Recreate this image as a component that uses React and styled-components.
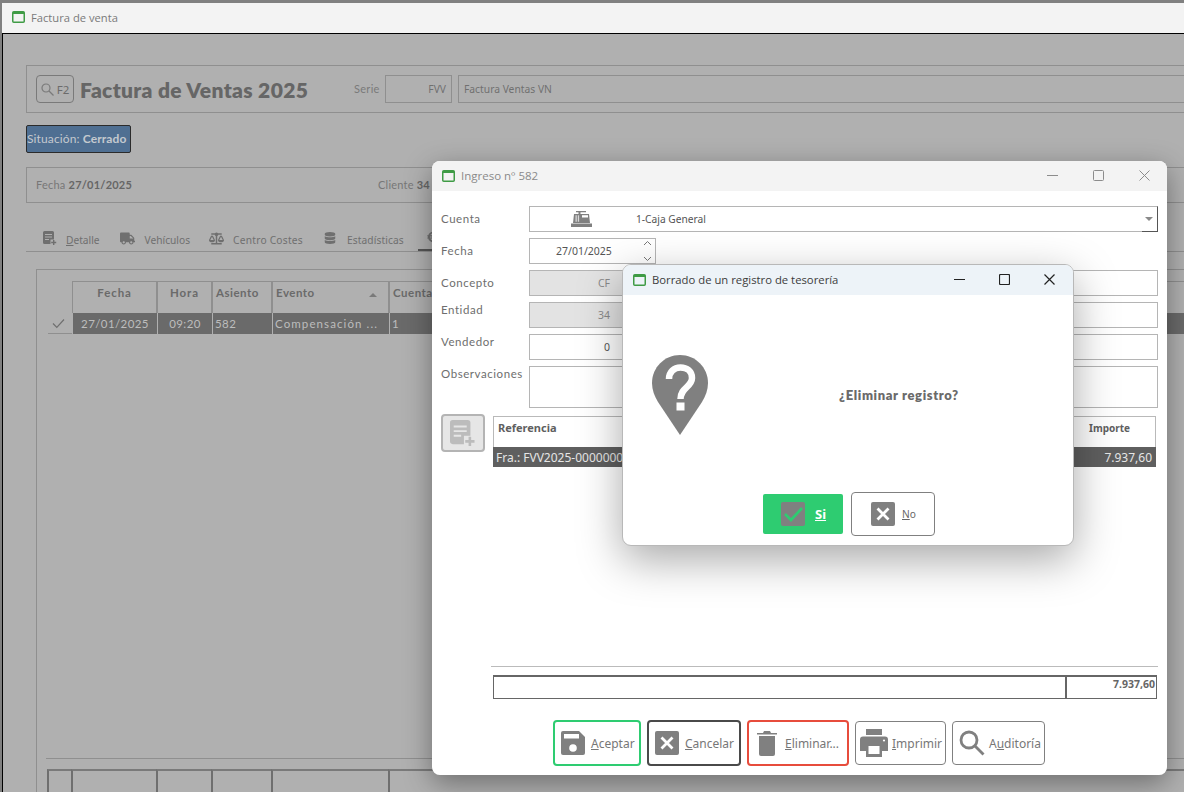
import React from "react";
import styled, { createGlobalStyle } from "styled-components";
import { FaTruck, FaBalanceScale, FaDatabase, FaEuroSign } from "react-icons/fa";

const Global = createGlobalStyle`
  html, body { margin: 0; padding: 0; background: #808080; overflow: hidden; }
  * { box-sizing: border-box; }
`;
const GOTHIC = `"Lato", "Open Sans", sans-serif`;
const TAHOMA = `"Noto Sans", "Open Sans", sans-serif`;
const SEGOE = `"Open Sans", "Noto Sans", sans-serif`;

const Desktop = styled.div`position: relative; width: 1184px; height: 792px; overflow: hidden; background: #808080;`;

/* main window */
const MainWindow = styled.div`position: absolute; left: 2px; top: 3px; width: 1200px; height: 800px; background: #b0b0b0; border-left: 1px solid #000;`;
const MainTitle = styled.div`
  height: 31px; margin-left: -1px; background: #f3f3f3; border-bottom: 1px solid #000; display: flex; align-items: center;
  padding: 0 0 2px 10px; gap: 6px; font: 11.2px ${SEGOE}; color: #7a7a7a;
`;
const MainBody = styled.div`padding: 31px 0 0 23px;`;
const HeaderBox = styled.div`
  height: 48px; border: 1px solid #8f8f8f; display: flex; align-items: center; padding-left: 9px;
`;
const F2Button = styled.div`
  width: 38px; height: 28px; border: 1px solid #7a7a7a; border-radius: 4px; display: flex; align-items: center; justify-content: center; gap: 3px;
  font: 11.5px ${TAHOMA}; color: #6b6b6b;
`;
const PageTitle = styled.div`font: 800 21px ${GOTHIC}; letter-spacing: .33px; color: #666; margin-left: 6px; width: 273px; white-space: nowrap;`;
const SerieLabel = styled.span`font: 11px ${GOTHIC}; letter-spacing: .3px; color: #7a7a7a; width: 32px; padding: 0 0 1px 1px;`;
const DimField = styled.div`
  height: 28px; border: 1px solid #8f8f8f; display: flex; align-items: center; font: 10.3px ${TAHOMA}; color: #707070;
  width: ${p => p.$w}px; flex: ${p => p.$grow ? 1 : "none"}; margin-left: ${p => p.$ml || 0}px; padding: 0 5px;
  justify-content: ${p => p.$right ? "flex-end" : "flex-start"};
`;
const Status = styled.div`
  width: 105px; height: 28px; margin-top: 12px; padding-bottom: 2px; background: #4f6f92; border: 1px solid #2b2b2b; border-radius: 2px; display: flex; align-items: center;
  font: 12px ${GOTHIC}; letter-spacing: .13px; color: #c4c9cf; white-space: nowrap; b { font-weight: 700; margin-left: 3px; }
`;
const InfoBox = styled.div`
  height: 36px; margin-top: 14px; padding: 0 0 2px 9px; border: 1px solid #8f8f8f; display: flex; align-items: center;
  font: 11px ${GOTHIC}; letter-spacing: .22px; color: #777; b { color: #666; font-weight: 700; }
`;
const InfoItem = styled.span`width: ${p => p.$w}px; white-space: nowrap;`;
const Tabs = styled.div`height: 27px; margin-top: 22px; border-bottom: 1px solid #8f8f8f; display: flex; align-items: flex-start; padding-left: 17px;`;
const Tab = styled.div`
  display: flex; align-items: center; gap: ${p => p.$gap}px; margin-right: ${p => p.$mr}px; height: 26px; white-space: nowrap;
  font: 10.2px ${TAHOMA}; letter-spacing: ${p => p.$ls || 0}px; color: #6f6f6f; svg { color: #6f6f6f; flex: none; }
  span { margin-top: 4px; }
`;
const ActiveTab = styled.div`
  padding-left: 7px; margin-left: -7px; width: 40px; height: 26px; display: flex; align-items: center; border-bottom: 2px solid #555; svg { color: #6f6f6f; }
`;
const Panel = styled.div`margin: 17px 0 0 10px; border-top: 1px solid #8f8f8f; border-left: 1px solid #8f8f8f; padding: 11px 0 0 11px;`;
const GridRow = styled.div`display: grid; grid-template-columns: 24px 85px 55px 60px 117px 1fr;`;
const HeadCell = styled.div`
  height: 32px; border-right: 1px solid #8f8f8f; border-left: 1px solid #8f8f8f; border-top: 1px solid #8f8f8f;
  display: flex; justify-content: ${p => p.$center ? "center" : "space-between"}; padding: 4px 3px 0; font: 700 11.5px ${GOTHIC};
  letter-spacing: ${p => p.$center ? ".9px" : ".5px"}; color: #6a6a6a;
`;
const BlankHead = styled.div`height: 32px;`;
const SortMark = styled.span`width: 0; height: 0; border: 4px solid transparent; border-bottom: 4px solid #7a7a7a; border-top: 0; margin: 7px 8px 0 0;`;
const DataCell = styled.div`
  height: 21px; background: #6a6a6a; border-left: 1px solid #b0b0b0; display: flex; align-items: center; justify-content: ${p => p.$center ? "center" : "flex-start"};
  padding: 0 2px; font: 11.5px ${GOTHIC}; letter-spacing: ${p => p.$ls || ".4px"}; color: #bdbdbd; white-space: nowrap;
`;
const MarkerCell = styled.div`height: 21px; border-bottom: 1px solid #8f8f8f; display: flex; align-items: center; justify-content: center; padding-right: 4px;`;
const Spacer = styled.div`height: ${p => p.$h}px;`;
const FootLine = styled.div`height: 1px; background: #8f8f8f; margin-left: -2px;`;
const FootRow = styled(GridRow)`margin-top: 10px;`;
const FootCell = styled.div`height: 40px; margin-left: -1px; border-left: 2px solid #6f6f6f; border-top: 2px solid #7a7a7a;`;

/* Ingreso window */
const IngresoWindow = styled.div`
  position: absolute; left: 432px; top: 161px; width: 735px; height: 614px; background: #fff; border-radius: 8px; overflow: hidden;
  display: flex; flex-direction: column; 
`;
const IngresoShadow = styled.div`position: absolute; left: 432px; top: 161px; width: 735px; height: 614px; border-radius: 8px; box-shadow: 0 8px 28px rgba(0,0,0,.38);`;
const WinTitle = styled.div`
  height: 30px; flex: none; background: ${p => p.$bg}; display: flex; align-items: center; padding: 0 0 1px 10px; gap: 6px;
  font: ${p => p.$size}px ${SEGOE}; color: ${p => p.$color};
`;
const TitleText = styled.span`padding-bottom: 1px;`;
const Controls = styled.div`
  margin-left: auto; display: flex; align-items: center; gap: ${p => p.$gap}px; padding-right: ${p => p.$pr}px; color: ${p => p.$color}; svg { display: block; }
`;
const Form = styled.div`padding: 15px 9px 0; display: flex; flex-direction: column; gap: 6px; flex: none;`;
const FormRow = styled.div`display: grid; grid-template-columns: 88px 1fr; align-items: ${p => p.$top ? "start" : "center"};`;
const FormLabel = styled.div`font: 11.5px ${GOTHIC}; letter-spacing: .56px; color: #6e6e6e; padding-top: ${p => p.$pt || 0}px; padding-bottom: ${p => p.$pb ?? 2}px;`;
const Field = styled.div`
  height: ${p => p.$h || 26}px; border: 1px solid #b5b5b5; background: #fff; display: flex; align-items: center; position: relative;
  width: ${p => p.$w ? `${p.$w}px` : "100%"}; font: 10.5px ${TAHOMA}; color: #555;
`;
const SelectField = styled(Field)`
  padding-left: 41px; gap: 44px; font-size: 10.2px; border-right: 1px solid #555;
  &::after { content: ""; position: absolute; right: 4px; top: 10px; border: 4px solid transparent; border-top: 4px solid #8a8a8a; border-bottom: 0; }
  &::before { content: ""; position: absolute; right: -1px; bottom: -1px; width: 16px; height: 1px; background: #555; }
`;
const DateField = styled(Field)`padding-left: 26px;`;
const Spinner = styled.div`position: absolute; right: 3px; top: 1px; bottom: 1px; display: flex; flex-direction: column; justify-content: space-between; color: #777; svg { display: block; }`;
const Split = styled.div`display: flex; gap: 4px;`;
const SmallField = styled(Field)`
  width: 96px; flex: none; background: ${p => p.$off ? "#e3e3e3" : "#fff"}; color: ${p => p.$off ? "#8a8a8a" : "#555"}; justify-content: flex-end; padding-right: 14px;
`;
const ListRow = styled.div`display: flex; gap: 8px; padding: 6px 11px 0 9px; align-items: flex-start;`;
const AddButton = styled.div`
  width: 44px; height: 38px; border: 2px solid #b4b4b4; border-radius: 4px; background: #e6e6e6; display: flex; align-items: center; justify-content: center; flex: none; color: #bcbcbc;
`;
const ListTable = styled.div`flex: 1; margin-top: 2px;`;
const ListHead = styled.div`
  height: 31px; border: 1px solid #b9b9b9; border-bottom: 0; display: flex; justify-content: space-between; padding: 3px 25px 0 4px;
  font: 700 11px ${TAHOMA}; color: #5f5f5f;
`;
const ImporteHead = styled.span`font-size: 10px; line-height: 16px;`;
const ListData = styled.div`
  height: 20px; background: #5f5f5f; display: flex; align-items: center; justify-content: space-between; padding: 0 4px 0 3px; font: 12px ${TAHOMA}; color: #e6e6e6;
`;
const TotalsArea = styled.div`margin: auto 9px 0 59px; border-top: 1px solid #bbb; padding-top: 8px;`;
const TotalsBox = styled.div`
  height: 24px; margin: 0 1px 0 2px; border: 1px solid #666; border-top-width: 2px; display: grid; grid-template-columns: 1fr 91px;
`;
const TotalValue = styled.div`border-left: 2px solid #666; text-align: right; font: 700 10.5px ${TAHOMA}; color: #666; padding-right: 1px; line-height: 14px;`;
const ActionBar = styled.div`display: flex; gap: 6px; padding: 21px 0 9px 121px; align-items: center; flex: none;`;
const ActionButton = styled.div`
  width: ${p => p.$w}px; height: ${p => p.$accent ? 46 : 44}px; border: ${p => p.$accent ? `2px solid ${p.$accent}` : "1px solid #808080"}; border-radius: 4px;
  display: flex; align-items: center; padding-left: ${p => p.$pl}px; gap: ${p => p.$gap}px; font: 12px ${TAHOMA}; color: #777; white-space: nowrap;
  svg { color: #808080; flex: none; }
`;

/* dialog */
const Dialog = styled.div`
  position: absolute; left: 622px; top: 264px; width: 452px; height: 282px; background: #fff; border-radius: 9px; border: 1px solid #b8b8b8;
  box-shadow: 0 14px 44px rgba(0,0,0,.34); display: flex; flex-direction: column; overflow: hidden;
`;
const DialogBody = styled.div`flex: 1; display: flex; align-items: flex-start; padding: 60px 0 0 29px;`;
const Question = styled.div`font: 800 13px ${GOTHIC}; letter-spacing: .62px; color: #6a6a6a; margin: 32px 0 0 131px; white-space: nowrap;`;
const DialogActions = styled.div`display: flex; align-items: center; gap: 8px; padding: 0 0 9px 140px; flex: none;`;
const YesButton = styled.div`
  width: 80px; height: 40px; background: #2ecc71; border-radius: 2px; display: flex; align-items: center; padding-left: 18px; gap: 10px; font: 700 13px ${TAHOMA}; color: #fff;
`;
const NoButton = styled.div`
  width: 84px; height: 44px; border: 1px solid #808080; border-radius: 4px; display: flex; align-items: center; padding-left: 19px; gap: 7px; font: 10.2px ${TAHOMA}; color: #666;
`;

const WinIcon = ({ c = "#3f9b45" }) => (
  <svg width="13" height="12" viewBox="0 0 13 12"><rect x=".75" y=".75" width="11.5" height="10.5" rx="1" fill="none" stroke={c} strokeWidth="1.5" /><rect x="1" y="1" width="11" height="2" fill={c} /></svg>
);
const WinControls = ({ color, gap, pr, sw = 1 }) => (
  <Controls $color={color} $gap={gap} $pr={pr}>
    <svg width="11" height="11" viewBox="0 0 11 11"><path d="M0 5.500h11" stroke="currentColor" strokeWidth={sw} /></svg>
    <svg width="11" height="11" viewBox="0 0 11 11"><rect x=".5" y=".5" width="10" height="10" rx="1" fill="none" stroke="currentColor" strokeWidth={sw} /></svg>
    <svg width="11" height="11" viewBox="0 0 11 11"><path d="M.5.5l10 10M10.500.5l-10 10" stroke="currentColor" strokeWidth={sw} /></svg>
  </Controls>
);
const DocPlus = ({ size = 14, color = "currentColor", cut = "#b0b0b0" }) => (
  <svg width={size} height={size} viewBox="0 0 14 14">
    <path d="M1.500 0h8A1.500 1.500 0 0 1 11 1.500V13H1.500A1.500 1.500 0 0 1 0 11.500v-10A1.500 1.500 0 0 1 1.500 0z" fill={color} />
    <path d="M2 3.500h7M2 6h7M2 8.500h4" stroke={cut} strokeWidth="1" />
    <path d="M7.500 8.500h6.500v5.500H7.500z" fill={cut} />
    <path d="M10.700 9v5M8.200 11.500h5" stroke={color} strokeWidth="1.400" />
  </svg>
);
const Register = () => (
  <svg width="21" height="16" viewBox="0 0 21 16">
    <path d="M5 0h10v1.300H9.500V3H18l1 9H2l1-9h4.500V1.300H5z" fill="#808080" />
    <path d="M4.500 4.200h1.300v6.500H4.500zM6.800 4.200h1.300v6.500H6.800z" fill="#d8d8d8" />
    <rect x="11" y="4.200" width="6" height="2.300" fill="#fff" />
    <rect x="0" y="12.500" width="21" height="3.500" fill="#808080" />
  </svg>
);
const Pin = () => (
  <svg width="56" height="80" viewBox="0 0 56 80">
    <path d="M28 0C12.500 0 0 12.500 0 28c0 7 2.500 13 6 19l22 33 22-33c3.500-6 6-12 6-19C56 12.500 43.500 0 28 0z" fill="#808080" />
    <path d="M17 24c0-7 5-11.500 11.500-11.500S40 16.500 40 23c0 9-11.500 9.500-11.500 21" fill="none" stroke="#fff" strokeWidth="6.500" />
    <rect x="24.500" y="47.500" width="8" height="8" fill="#fff" />
  </svg>
);
const CrossBox = () => (
  <svg width="24" height="24" viewBox="0 0 24 24"><rect width="24" height="24" rx="2" fill="#808080" /><path d="M6.500 6.500l11 11M17.500 6.500l-11 11" stroke="#fff" strokeWidth="2.800" /></svg>
);
const CheckBox = () => (
  <svg width="24" height="24" viewBox="0 0 24 24"><rect width="24" height="24" rx="2" fill="#808080" /><path d="M4 12l6 6 11-12" fill="none" stroke="#2ecc71" strokeWidth="2.600" /></svg>
);
const Disk = () => (
  <svg width="24" height="24" viewBox="0 0 24 24">
    <path d="M2 0h16l6 6v16a2 2 0 0 1-2 2H2a2 2 0 0 1-2-2V2a2 2 0 0 1 2-2z" fill="#808080" />
    <rect x="3" y="3" width="15" height="4.500" fill="#fff" /><circle cx="12" cy="17" r="3.800" fill="#fff" />
  </svg>
);
const Bin = () => (
  <svg width="20" height="25" viewBox="0 0 20 25">
    <path d="M7 0h6l1 2h6v1.500H0V2h6z" fill="#808080" />
    <path d="M2 5h16v18a2 2 0 0 1-2 2H4a2 2 0 0 1-2-2z" fill="#808080" />
  </svg>
);
const Printer = () => (
  <svg width="28" height="28" viewBox="0 0 28 28">
    <rect x="6" y="0" width="16" height="6" fill="#808080" />
    <path d="M3 7.500h22a3 3 0 0 1 3 3V22h-6v6H6v-6H0V10.500a3 3 0 0 1 3-3z" fill="#808080" />
    <rect x="8.500" y="17" width="11" height="8" fill="#fff" />
    <circle cx="24" cy="11.500" r="1.100" fill="#fff" />
  </svg>
);
const Lens = () => (
  <svg width="26" height="26" viewBox="0 0 26 26"><circle cx="10" cy="10" r="8" fill="none" stroke="#808080" strokeWidth="2.800" /><path d="M16 16l8.500 8.500" stroke="#808080" strokeWidth="2.800" /></svg>
);
const Tick = () => (
  <svg width="13" height="11" viewBox="0 0 13 11"><path d="M1 5.500l3.800 3.800L12 1.500" fill="none" stroke="#6f6f6f" strokeWidth="1.200" /></svg>
);
const MiniLens = () => (
  <svg width="13" height="13" viewBox="0 0 13 13"><circle cx="5" cy="5" r="4" fill="none" stroke="#7a7a7a" strokeWidth="1.200" /><path d="M8 8l4.500 4.500" stroke="#7a7a7a" strokeWidth="1.200" /></svg>
);
const Chevron = ({ up }) => (
  <svg width="9" height="7" viewBox="0 0 9 7"><path d={up ? "M1 5l3.500-3.500L8 5" : "M1 2l3.500 3.500L8 2"} fill="none" stroke="currentColor" strokeWidth="1" /></svg>
);

export default function App() {
  return (
    <Desktop>
      <Global />
      <MainWindow>
        <MainTitle><WinIcon />Factura de venta</MainTitle>
        <MainBody>
          <HeaderBox>
            <F2Button><MiniLens />F2</F2Button>
            <PageTitle>Factura de Ventas 2025</PageTitle>
            <SerieLabel>Serie</SerieLabel>
            <DimField $w={67} $right>FVV</DimField>
            <DimField $grow $ml={6}>Factura Ventas VN</DimField>
          </HeaderBox>
          <Status>Situación:<b>Cerrado</b></Status>
          <InfoBox>
            <InfoItem $w={342}>Fecha <b>27/01/2025</b></InfoItem>
            <InfoItem>Cliente <b>34</b></InfoItem>
          </InfoBox>
          <Tabs>
            <Tab $gap={9} $mr={20}><DocPlus size={14} color="#6f6f6f" /><span><u>D</u>etalle</span></Tab>
            <Tab $gap={10} $mr={19}><FaTruck size={15} /><span>Vehículos</span></Tab>
            <Tab $gap={9} $mr={21} $ls={.24}><FaBalanceScale size={15} /><span>Centro Costes</span></Tab>
            <Tab $gap={11} $mr={21} $ls={.12}><FaDatabase size={12} /><span>Estadísticas</span></Tab>
            <ActiveTab><FaEuroSign size={12} /></ActiveTab>
          </Tabs>
          <Panel>
            <GridRow>
              <BlankHead />
              <HeadCell $center>Fecha</HeadCell>
              <HeadCell $center>Hora</HeadCell>
              <HeadCell>Asiento</HeadCell>
              <HeadCell>Evento<SortMark /></HeadCell>
              <HeadCell>Cuenta</HeadCell>
            </GridRow>
            <GridRow>
              <MarkerCell><Tick /></MarkerCell>
              <DataCell $center>27/01/2025</DataCell>
              <DataCell $center>09:20</DataCell>
              <DataCell>582</DataCell>
              <DataCell $ls="1.1px">Compensación ...</DataCell>
              <DataCell>1</DataCell>
            </GridRow>
            <Spacer $h={424} />
            <FootLine />
            <FootRow>
              <FootCell /><FootCell /><FootCell /><FootCell /><FootCell /><FootCell />
            </FootRow>
          </Panel>
        </MainBody>
      </MainWindow>

      <IngresoShadow />
      <IngresoWindow>
        <WinTitle $bg="#f3f3f3" $size={11.5} $color="#8a8a8a">
          <WinIcon /><TitleText>Ingreso nº 582</TitleText>
          <WinControls color="#8c8c8c" gap={35} pr={17} />
        </WinTitle>
        <Form>
          <FormRow>
            <FormLabel>Cuenta</FormLabel>
            <SelectField><Register /><span>1-Caja General</span></SelectField>
          </FormRow>
          <FormRow>
            <FormLabel>Fecha</FormLabel>
            <DateField $w={127}>27/01/2025<Spinner><Chevron up /><Chevron /></Spinner></DateField>
          </FormRow>
          <FormRow>
            <FormLabel>Concepto</FormLabel>
            <Split><SmallField $off>CF</SmallField><Field /></Split>
          </FormRow>
          <FormRow>
            <FormLabel $pb={12}>Entidad</FormLabel>
            <Split><SmallField $off>34</SmallField><Field /></Split>
          </FormRow>
          <FormRow>
            <FormLabel $pb={12}>Vendedor</FormLabel>
            <Split><SmallField>0</SmallField><Field /></Split>
          </FormRow>
          <FormRow $top>
            <FormLabel $pt={1} $pb={0}>Observaciones</FormLabel>
            <Field $h={42} />
          </FormRow>
        </Form>
        <ListRow>
          <AddButton><DocPlus size={26} color="#bcbcbc" cut="#e6e6e6" /></AddButton>
          <ListTable>
            <ListHead><span>Referencia</span><ImporteHead>Importe</ImporteHead></ListHead>
            <ListData><span>Fra.: FVV2025-0000000</span><span>7.937,60</span></ListData>
          </ListTable>
        </ListRow>
        <TotalsArea>
          <TotalsBox><div /><TotalValue>7.937,60</TotalValue></TotalsBox>
        </TotalsArea>
        <ActionBar>
          <ActionButton $w={88} $accent="#2ecc71" $pl={6} $gap={6}><Disk /><span><u>A</u>ceptar</span></ActionButton>
          <ActionButton $w={94} $accent="#4a4a4a" $pl={6} $gap={6}><CrossBox /><span><u>C</u>ancelar</span></ActionButton>
          <ActionButton $w={102} $accent="#e74c3c" $pl={8} $gap={8}><Bin /><span><u>E</u>liminar...</span></ActionButton>
          <ActionButton $w={91} $pl={4} $gap={4}><Printer /><span><u>I</u>mprimir</span></ActionButton>
          <ActionButton $w={93} $pl={6} $gap={4}><Lens /><span>A<u>u</u>ditoría</span></ActionButton>
        </ActionBar>
      </IngresoWindow>

      <Dialog>
        <WinTitle $bg="#edf3f8" $size={11.3} $color="#3c3c3c">
          <WinIcon /><TitleText>Borrado de un registro de tesorería</TitleText>
          <WinControls color="#222" gap={34} pr={18} sw={1.2} />
        </WinTitle>
        <DialogBody>
          <Pin />
          <Question>¿Eliminar registro?</Question>
        </DialogBody>
        <DialogActions>
          <YesButton><CheckBox /><u>Si</u></YesButton>
          <NoButton><CrossBox /><span><u>N</u>o</span></NoButton>
        </DialogActions>
      </Dialog>
    </Desktop>
  );
}
